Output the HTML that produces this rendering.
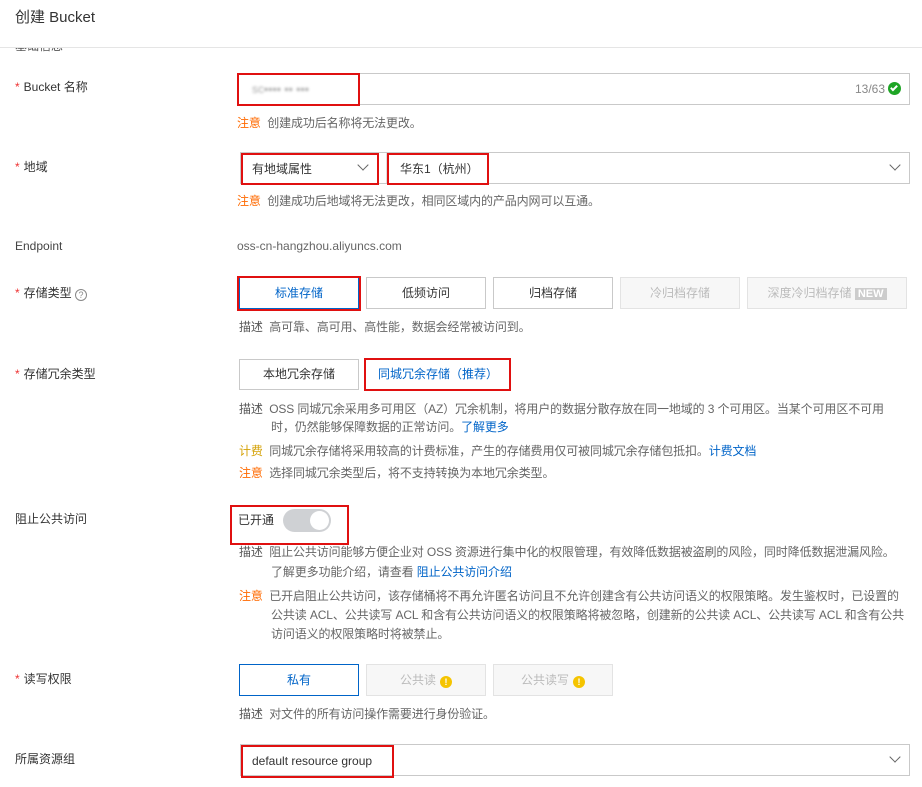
<!DOCTYPE html>
<html><head><meta charset="utf-8"><style>
*{margin:0;padding:0;box-sizing:border-box}
body{width:922px;height:787px;background:#fff;font-family:"Liberation Sans","Noto Sans CJK SC",sans-serif;font-size:12px;color:#333;position:relative;overflow:hidden}
.a{position:absolute;white-space:nowrap;line-height:18px}
.lab{left:15px;color:#333}
.req{color:#e33;margin-right:4px}
.box{position:absolute;border:1px solid #c9c9c9;background:#fff}
.red{position:absolute;border:2px solid #e01010}
.btn{position:absolute;border:1px solid #c9c9c9;background:#fff;text-align:center;line-height:30px;color:#333}
.dis{background:#f7f7f7;border-color:#e3e3e3;color:#bbb}
.sel{border-color:#0064c8;color:#0064c8}
.k{color:#555}
.d{color:#666}
.w{color:#ff6a00}
.f{color:#d4a106}
.l{color:#0064c8}
.t{letter-spacing:-0.12px}
.chev{position:absolute;width:8px;height:8px;border-right:1.3px solid #666;border-bottom:1.3px solid #666;transform:rotate(45deg)}
.warn{display:inline-block;width:12px;height:12px;border-radius:50%;background:#f5c400;color:#fff;font-size:9px;line-height:12px;text-align:center;font-weight:bold;vertical-align:-1px;margin-left:4px}
</style></head><body>
<div class="a" style="left:15px;top:8px;font-size:15px;line-height:20px;color:#333">创建 Bucket</div>
<div style="position:absolute;left:0;top:47px;width:922px;height:1px;background:#e5e5e5"></div>
<div style="position:absolute;left:0;top:48px;width:200px;height:10px;overflow:hidden"><div class="a" style="left:15px;top:-11px;color:#555">基础信息</div></div>

<div class="a lab" style="top:78px"><span class="req">*</span>Bucket 名称</div>
<div class="box" style="left:237px;top:73px;width:673px;height:32px"></div>
<div class="a" style="left:252px;top:80px;color:#aaa;filter:blur(1.3px)">sc▪▪▪▪ ▪▪ ▪▪▪</div>
<div class="a" style="left:855px;top:80px;color:#888">13/63</div>
<div style="position:absolute;left:888px;top:82px;width:13px;height:13px;border-radius:50%;background:#1ea525"><div style="position:absolute;left:4px;top:2px;width:4px;height:7px;border-right:2px solid #fff;border-bottom:2px solid #fff;transform:rotate(45deg)"></div></div>
<div class="red" style="left:237px;top:73px;width:123px;height:33px"></div>
<div class="a t" style="left:237px;top:114px"><span class="w">注意</span> <span class="d">&nbsp;创建成功后名称将无法更改。</span></div>

<div class="a lab" style="top:158px"><span class="req">*</span>地域</div>
<div class="box" style="left:240px;top:152px;width:670px;height:32px"></div>
<div style="position:absolute;left:378px;top:153px;width:1px;height:30px;background:#ddd"></div>
<div style="position:absolute;left:386px;top:153px;width:1px;height:30px;background:#ddd"></div>
<div class="a" style="left:252px;top:160px">有地域属性</div>
<div class="chev" style="left:359px;top:161px"></div>
<div class="a" style="left:400px;top:160px">华东1（杭州）</div>
<div class="chev" style="left:891px;top:161px"></div>
<div class="red" style="left:241px;top:153px;width:138px;height:32px"></div>
<div class="red" style="left:387px;top:153px;width:102px;height:32px"></div>
<div class="a t" style="left:237px;top:192px"><span class="w">注意</span> <span class="d">&nbsp;创建成功后地域将无法更改，相同区域内的产品内网可以互通。</span></div>

<div class="a lab" style="top:237px;color:#444">Endpoint</div>
<div class="a d" style="left:237px;top:237px">oss-cn-hangzhou.aliyuncs.com</div>

<div class="a lab" style="top:284px"><span class="req">*</span>存储类型 <span style="display:inline-block;width:12px;height:12px;border:1px solid #888;border-radius:50%;font-size:9px;line-height:10px;text-align:center;color:#888;vertical-align:-1px">?</span></div>
<div class="btn sel" style="left:239px;top:277px;width:120px;height:32px">标准存储</div>
<div class="btn" style="left:366px;top:277px;width:120px;height:32px">低频访问</div>
<div class="btn" style="left:493px;top:277px;width:120px;height:32px">归档存储</div>
<div class="btn dis" style="left:620px;top:277px;width:120px;height:32px">冷归档存储</div>
<div class="btn dis" style="left:747px;top:277px;width:160px;height:32px">深度冷归档存储 <span style="background:#ccc;color:#fff;font-weight:bold;padding:0 3px;font-size:11px">NEW</span></div>
<div class="red" style="left:237px;top:276px;width:124px;height:35px"></div>
<div class="a t" style="left:239px;top:318px"><span class="k">描述</span> <span class="d">&nbsp;高可靠、高可用、高性能，数据会经常被访问到。</span></div>

<div class="a lab" style="top:365px"><span class="req">*</span>存储冗余类型</div>
<div class="btn" style="left:239px;top:359px;width:120px;height:31px;line-height:29px">本地冗余存储</div>
<div class="btn sel" style="left:365px;top:359px;width:146px;height:31px;line-height:29px">同城冗余存储（推荐）</div>
<div class="red" style="left:364px;top:358px;width:147px;height:33px"></div>
<div class="a t" style="left:239px;top:400px"><span class="k">描述</span> <span class="d">&nbsp;OSS 同城冗余采用多可用区（AZ）冗余机制，将用户的数据分散存放在同一地域的 3 个可用区。当某个可用区不可用</span></div>
<div class="a d t" style="left:271px;top:418px">时，仍然能够保障数据的正常访问。<span class="l">了解更多</span></div>
<div class="a t" style="left:239px;top:442px"><span class="f">计费</span> <span class="d">&nbsp;同城冗余存储将采用较高的计费标准，产生的存储费用仅可被同城冗余存储包抵扣。</span><span class="l">计费文档</span></div>
<div class="a t" style="left:239px;top:464px"><span class="w">注意</span> <span class="d">&nbsp;选择同城冗余类型后，将不支持转换为本地冗余类型。</span></div>

<div class="a lab" style="top:510px">阻止公共访问</div>
<div class="a" style="left:238px;top:511px">已开通</div>
<div style="position:absolute;left:283px;top:509px;width:48px;height:23px;border-radius:12px;background:#cfd1d4"><div style="position:absolute;right:2px;top:2px;width:19px;height:19px;border-radius:50%;background:#fff"></div></div>
<div class="red" style="left:230px;top:505px;width:119px;height:40px"></div>
<div class="a t" style="left:239px;top:543px"><span class="k">描述</span> <span class="d">&nbsp;阻止公共访问能够方便企业对 OSS 资源进行集中化的权限管理，有效降低数据被盗刷的风险，同时降低数据泄漏风险。</span></div>
<div class="a d t" style="left:271px;top:563px">了解更多功能介绍，请查看 <span class="l">阻止公共访问介绍</span></div>
<div class="a t" style="left:239px;top:587px"><span class="w">注意</span> <span class="d">&nbsp;已开启阻止公共访问，该存储桶将不再允许匿名访问且不允许创建含有公共访问语义的权限策略。发生鉴权时，已设置的</span></div>
<div class="a d t" style="left:271px;top:606px">公共读 ACL、公共读写 ACL 和含有公共访问语义的权限策略将被忽略，创建新的公共读 ACL、公共读写 ACL 和含有公共</div>
<div class="a d t" style="left:271px;top:625px">访问语义的权限策略时将被禁止。</div>

<div class="a lab" style="top:670px"><span class="req">*</span>读写权限</div>
<div class="btn sel" style="left:239px;top:664px;width:120px;height:32px">私有</div>
<div class="btn dis" style="left:366px;top:664px;width:120px;height:32px">公共读<span class="warn">!</span></div>
<div class="btn dis" style="left:493px;top:664px;width:120px;height:32px">公共读写<span class="warn">!</span></div>
<div class="a t" style="left:239px;top:705px"><span class="k">描述</span> <span class="d">&nbsp;对文件的所有访问操作需要进行身份验证。</span></div>

<div class="a lab" style="top:750px">所属资源组</div>
<div class="box" style="left:240px;top:744px;width:670px;height:32px"></div>
<div class="a" style="left:252px;top:752px">default resource group</div>
<div class="chev" style="left:891px;top:753px"></div>
<div class="red" style="left:241px;top:745px;width:153px;height:33px"></div>
</body></html>
